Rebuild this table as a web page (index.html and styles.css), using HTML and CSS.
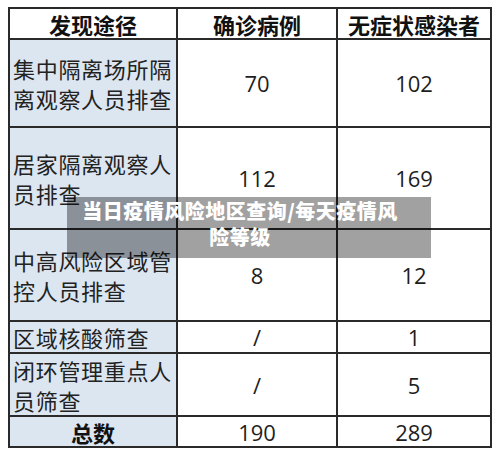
FILE: index.html
```html
<!DOCTYPE html>
<html lang="zh-CN">
<head>
<meta charset="utf-8">
<link rel="stylesheet" href="styles.css">
</head>
<body>
<div class="page">
  <div class="grid">
    <div class="cell head">发现途径</div>
    <div class="cell head">确诊病例</div>
    <div class="cell head">无症状感染者</div>

    <div class="cell name">集中隔离场所隔<br>离观察人员排查</div>
    <div class="cell num">70</div>
    <div class="cell num">102</div>

    <div class="cell name">居家隔离观察人<br>员排查</div>
    <div class="cell num">112</div>
    <div class="cell num">169</div>

    <div class="cell name">中高风险区域管<br>控人员排查</div>
    <div class="cell num">8</div>
    <div class="cell num">12</div>

    <div class="cell name">区域核酸筛查</div>
    <div class="cell num">/</div>
    <div class="cell num">1</div>

    <div class="cell name">闭环管理重点人<br>员筛查</div>
    <div class="cell num">/</div>
    <div class="cell num">5</div>

    <div class="cell total">总数</div>
    <div class="cell num">190</div>
    <div class="cell num">289</div>
  </div>
  <div class="banner">当日疫情风险地区查询/每天疫情风<br>险等级</div>
</div>
</body>
</html>
```

FILE: styles.css
```css
* { box-sizing: border-box; }
html, body { margin: 0; padding: 0; background: #ffffff; }
.page {
  position: relative;
  width: 500px;
  height: 456px;
  padding: 7px 0 0 8px;
  font-family: "Noto Sans CJK SC", "Noto Sans", sans-serif;
  color: #1e1e1e;
}
.grid {
  display: grid;
  width: 484px;
  grid-template-columns: 166px 158px 152px;
  grid-template-rows: 29px 86px 100px 90px 30px 61px 29px;
  gap: 2px;
  padding: 2px;
  background: #2a2a2a;
}
.cell {
  background: #ffffff;
  display: flex;
  align-items: center;
  justify-content: center;
  font-size: 22px;
  line-height: 30px;
}
.head {
  font-weight: 700;
  color: #111;
}
.name {
  background: #dce6f1;
  justify-content: flex-start;
  padding-left: 3px;
  letter-spacing: 0.7px;
  color: #222;
}
.total {
  background: #dce6f1;
  font-weight: 700;
  color: #111;
}
.num {
  font-family: "Open Sans", "Noto Sans", sans-serif;
  font-size: 22px;
  color: #1e1e1e;
}
.banner {
  position: absolute;
  left: 67px;
  top: 197px;
  width: 364px;
  height: 61px;
  padding: 1px 29px 0 11px;
  background: rgba(0, 0, 0, 0.37);
  color: #ffffff;
  font-weight: 900;
  font-size: 20px;
  line-height: 26px;
  letter-spacing: 0.5px;
  text-align: center;
}
```
